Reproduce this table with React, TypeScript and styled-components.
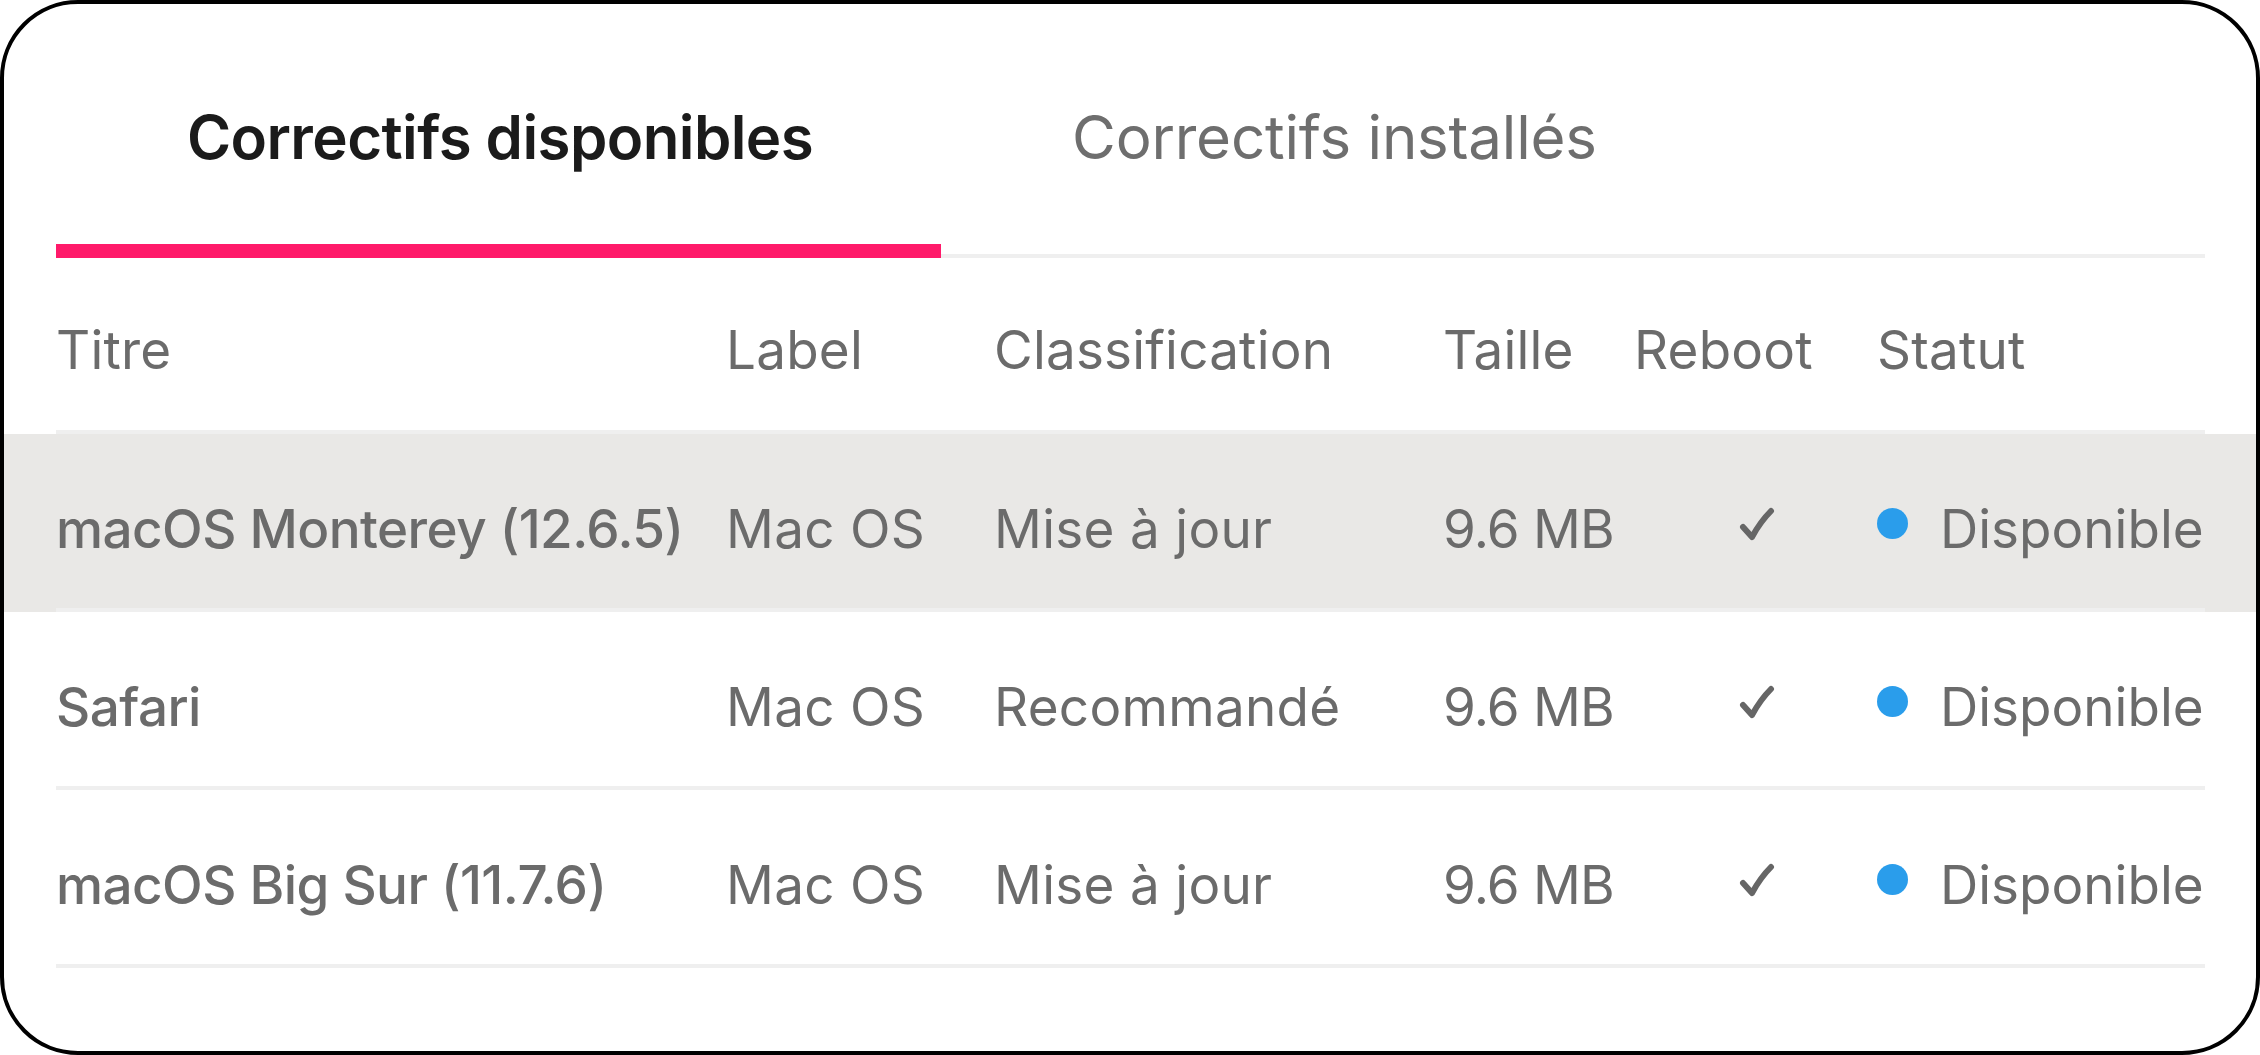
import React from "react";
import styled, { createGlobalStyle } from "styled-components";

const GlobalStyle = createGlobalStyle`
  html, body {
    margin: 0;
    padding: 0;
    background: #ffffff;
  }
  body {
    font-family: "Inter", "Liberation Sans", sans-serif;
  }
  * { box-sizing: border-box; }
`;

const Card = styled.div`
  width: 2260px;
  height: 1055px;
  border: 4px solid #000000;
  border-radius: 78px;
  background: #ffffff;
  overflow: hidden;
  display: flex;
  flex-direction: column;
`;

const TabBar = styled.div`
  display: flex;
  align-items: flex-end;
  margin: 0 51px 0 52px;
  padding-top: 97px;
`;

const Tab = styled.div<{ $active?: boolean }>`
  flex: 0 0 885px;
  padding: 0 0 ${(p) => (p.$active ? "70px" : "80px")} 131px;
  border-bottom: ${(p) => (p.$active ? "14px solid #ff1a6a" : "4px solid #efefef")};
  font-size: 60px;
  line-height: 73px;
  font-weight: ${(p) => (p.$active ? 600 : 400)};
  letter-spacing: ${(p) => (p.$active ? "-0.6px" : "-0.2px")};
  color: ${(p) => (p.$active ? "#1b1b1b" : "#6e6e6e")};
  white-space: nowrap;
`;

const TabFiller = styled.div`
  flex: 1;
  border-bottom: 4px solid #efefef;
`;

const Columns = "670px 268px 449px 191px 243px 328px";

const HeaderRow = styled.div`
  display: grid;
  grid-template-columns: ${Columns};
  align-items: center;
  margin: 0 51px 0 52px;
  height: 176px;
  padding-top: 12px;
  border-bottom: 4px solid #efefef;
`;

const HeaderCell = styled.div`
  font-size: 53px;
  line-height: 64px;
  color: #6b6b6b;
  white-space: nowrap;
  letter-spacing: 0.2px;
`;

const RowOuter = styled.div<{ $highlight?: boolean }>`
  background: ${(p) => (p.$highlight ? "#e9e8e6" : "transparent")};
`;

const RowGrid = styled.div`
  display: grid;
  grid-template-columns: ${Columns};
  align-items: center;
  margin: 0 51px 0 52px;
  height: 178px;
  padding-top: 15px;
  border-bottom: 4px solid #efefef;
`;

const Cell = styled.div<{ $strong?: boolean }>`
  font-size: 53px;
  line-height: 64px;
  color: #6b6b6b;
  font-weight: ${(p) => (p.$strong ? 500 : 400)};
  letter-spacing: ${(p) => (p.$strong ? "-0.55px" : "0.3px")};
  white-space: nowrap;
`;

const SizeCell = styled(Cell)`
  letter-spacing: -0.8px;
`;

const RebootCell = styled.div`
  display: flex;
  align-items: center;
  padding-left: 104px;
`;

const CheckIcon = styled.svg`
  width: 38px;
  height: 34px;
  margin-bottom: 10px;
`;

const StatusCell = styled.div`
  display: flex;
  align-items: center;
  gap: 32px;
  font-size: 53px;
  line-height: 64px;
  color: #6b6b6b;
  white-space: nowrap;
`;

const Dot = styled.span`
  width: 31px;
  height: 31px;
  border-radius: 50%;
  background: #2a9deb;
  flex: 0 0 auto;
  margin-bottom: 10px;
`;

type Patch = {
  title: string;
  label: string;
  classification: string;
  size: string;
  reboot: boolean;
  status: string;
};

const patches: Patch[] = [
  { title: "macOS Monterey (12.6.5)", label: "Mac OS", classification: "Mise à jour", size: "9.6 MB", reboot: true, status: "Disponible" },
  { title: "Safari", label: "Mac OS", classification: "Recommandé", size: "9.6 MB", reboot: true, status: "Disponible" },
  { title: "macOS Big Sur (11.7.6)", label: "Mac OS", classification: "Mise à jour", size: "9.6 MB", reboot: true, status: "Disponible" },
];

const Check = () => (
  <CheckIcon viewBox="0 0 38 34" fill="none">
    <path
      d="M5 20 L14 30 C 20 19, 27 10, 33 4"
      stroke="#666666"
      strokeWidth="6"
      strokeLinecap="round"
      strokeLinejoin="round"
    />
  </CheckIcon>
);

export default function App() {
  return (
    <>
      <GlobalStyle />
      <Card>
        <TabBar>
          <Tab $active>Correctifs disponibles</Tab>
          <Tab>Correctifs installés</Tab>
          <TabFiller />
        </TabBar>
        <HeaderRow>
          <HeaderCell>Titre</HeaderCell>
          <HeaderCell>Label</HeaderCell>
          <HeaderCell>Classification</HeaderCell>
          <HeaderCell>Taille</HeaderCell>
          <HeaderCell>Reboot</HeaderCell>
          <HeaderCell>Statut</HeaderCell>
        </HeaderRow>
        {patches.map((p, i) => (
          <RowOuter key={p.title} $highlight={i === 0}>
            <RowGrid>
              <Cell $strong>{p.title}</Cell>
              <Cell>{p.label}</Cell>
              <Cell>{p.classification}</Cell>
              <SizeCell>{p.size}</SizeCell>
              <RebootCell>{p.reboot && <Check />}</RebootCell>
              <StatusCell>
                <Dot />
                {p.status}
              </StatusCell>
            </RowGrid>
          </RowOuter>
        ))}
      </Card>
    </>
  );
}
